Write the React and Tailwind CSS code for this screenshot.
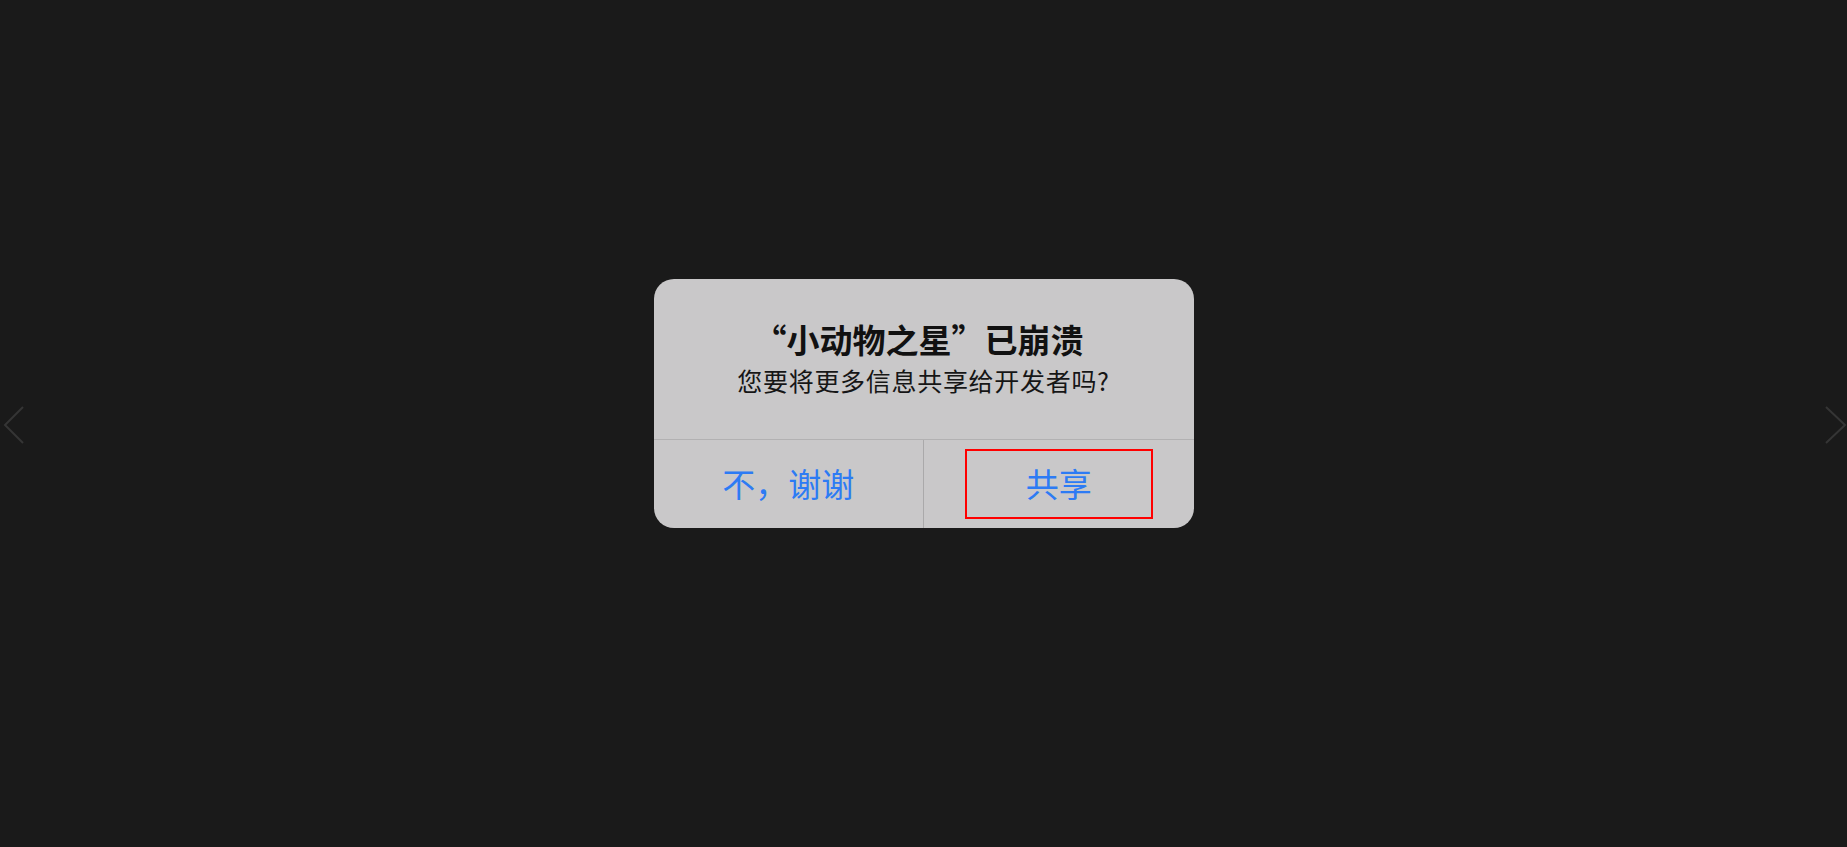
export default function App() {
  const cjk = { fontFamily: '"Noto Sans CJK SC", "Noto Sans", sans-serif' };
  return (
    <div className="relative w-[1847px] h-[847px] bg-[#1a1a1a] overflow-hidden" style={cjk}>
      <svg className="absolute left-0 top-[400px]" width="30" height="50" viewBox="0 0 30 50">
        <polyline points="23,7 5,25 23,43" fill="none" stroke="#353535" strokeWidth="2" />
      </svg>
      <svg className="absolute right-0 top-[400px]" width="30" height="50" viewBox="0 0 30 50">
        <polyline points="9,7 28,25 9,43" fill="none" stroke="#353535" strokeWidth="2" />
      </svg>
      <div className="pt-[279px] flex justify-center">
        <div className="w-[540px] rounded-[20px] bg-[#c9c8c9] overflow-hidden">
          <div className="pt-[40px] pb-[42px] flex flex-col items-center">
            <div className="h-[40px] leading-[40px] text-[33px] font-semibold text-[#111111] mr-[10px]">
              “小动物之星”已崩溃
            </div>
            <div className="mt-[4px] h-[34px] leading-[34px] text-[25px] tracking-[0.7px] text-[#161616]">
              您要将更多信息共享给开发者吗?
            </div>
          </div>
          <div className="h-px bg-[#b2b1b2]" />
          <div className="flex h-[88px]">
            <div className="flex-1 flex items-center justify-center text-[33px] text-[#2d7bf4]">
              不，谢谢
            </div>
            <div className="w-px bg-[#aaa9aa]" />
            <div className="flex-1 flex items-center justify-center">
              <div className="w-[188px] h-[70px] border-2 border-[#ff0000] flex items-center justify-center text-[33px] text-[#2d7bf4]">
                共享
              </div>
            </div>
          </div>
        </div>
      </div>
    </div>
  );
}
